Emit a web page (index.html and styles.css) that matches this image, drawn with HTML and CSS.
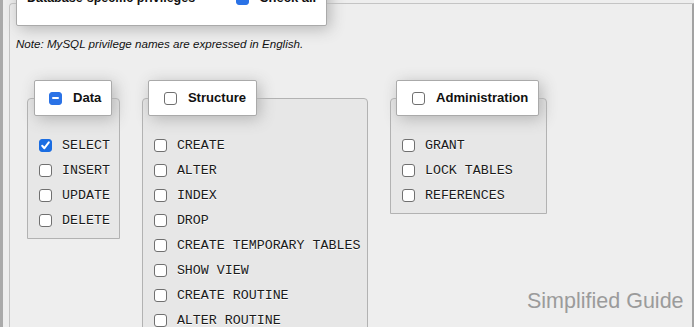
FILE: index.html
```html
<!DOCTYPE html>
<html>
<head>
<meta charset="utf-8">
<link rel="stylesheet" href="styles.css">
</head>
<body>
<div class="frame">
  <div class="outer">
    <div class="outer-legend">
      <span class="title">Database-specific privileges</span>
      <span class="cb cb-mixed"></span>
      <span class="check-all">Check all</span>
    </div>
    <p class="note">Note: MySQL privilege names are expressed in English.</p>
    <div class="groups">
      <div class="group">
        <div class="legend"><span class="cb cb-mixed"></span><span>Data</span></div>
        <ul class="privs">
          <li><span class="cb cb-on"><svg viewBox="0 0 13 13" width="13" height="13"><path d="M3.2 6.8 L5.4 9.2 L9.8 3.4" fill="none" stroke="#fff" stroke-width="2" stroke-linecap="round" stroke-linejoin="round"/></svg></span><span>SELECT</span></li>
          <li><span class="cb"></span><span>INSERT</span></li>
          <li><span class="cb"></span><span>UPDATE</span></li>
          <li><span class="cb"></span><span>DELETE</span></li>
        </ul>
      </div>
      <div class="group">
        <div class="legend"><span class="cb"></span><span>Structure</span></div>
        <ul class="privs">
          <li><span class="cb"></span><span>CREATE</span></li>
          <li><span class="cb"></span><span>ALTER</span></li>
          <li><span class="cb"></span><span>INDEX</span></li>
          <li><span class="cb"></span><span>DROP</span></li>
          <li><span class="cb"></span><span>CREATE TEMPORARY TABLES</span></li>
          <li><span class="cb"></span><span>SHOW VIEW</span></li>
          <li><span class="cb"></span><span>CREATE ROUTINE</span></li>
          <li><span class="cb"></span><span>ALTER ROUTINE</span></li>
          <li><span class="cb"></span><span>EXECUTE</span></li>
          <li><span class="cb"></span><span>CREATE VIEW</span></li>
        </ul>
      </div>
      <div class="group">
        <div class="legend"><span class="cb"></span><span>Administration</span></div>
        <ul class="privs">
          <li><span class="cb"></span><span>GRANT</span></li>
          <li><span class="cb"></span><span>LOCK TABLES</span></li>
          <li><span class="cb"></span><span>REFERENCES</span></li>
        </ul>
      </div>
    </div>
  </div>
  <div class="watermark">Simplified Guide</div>
</div>
</body>
</html>
```

FILE: styles.css
```css
html, body {
  margin: 0;
  padding: 0;
  height: 100%;
  overflow: hidden;
  background: #fff;
}

.frame {
  position: relative;
  width: 691px;
  height: 327px;
  overflow: hidden;
  background: #eee;
  border-left: 3px solid #aaa;
  font-family: "Liberation Sans", Arial, sans-serif;
  color: #111;
}

.outer {
  box-sizing: border-box;
  width: 685px;
  height: 400px;
  margin: 3px 0 0 6px;
  border: 1px solid #c4c4c4;
  border-right: 2px solid #a2a2a2;
  border-radius: 4px 0 0 0;
}

.outer-legend {
  display: flex;
  align-items: center;
  width: fit-content;
  margin: -26px 0 0 6px;
  padding: 10px 10px 18px 10px;
  line-height: 18px;
  background: #fff;
  border: 1px solid #aaa;
  border-radius: 2px;
  box-shadow: 3px 3px 15px #b5b5b5;
  font-weight: bold;
}

.outer-legend .title {
  font-size: 12.5px;
  margin-right: 41px;
}

.outer-legend .check-all {
  font-size: 13px;
  margin-left: 10px;
}

.note {
  margin: 10px 0 0 6px;
  font-style: italic;
  font-size: 11.6px;
  line-height: 15px;
  color: #111;
}

.groups {
  display: flex;
  align-items: flex-start;
  gap: 22px;
  margin: 29px 0 0 17px;
}

.group {
  margin-top: 18px;
  padding: 0 6.5px 5px 5.5px;
  background: #e7e7e7;
  border: 1px solid #b2b2b2;
  border-radius: 4px 4px 0 0;
}

.legend {
  display: flex;
  align-items: center;
  width: fit-content;
  margin-top: -19px;
  padding: 8px 10px 8px 14.5px;
  line-height: 18px;
  background: #fff;
  border: 1px solid #aaa;
  border-radius: 2px;
  box-shadow: 3px 3px 15px #b5b5b5;
  font-weight: bold;
  font-size: 13.1px;
  color: #111;
}

.legend .cb {
  margin-right: 11px;
}

.privs {
  list-style: none;
  margin: 17px 0 0 0;
  padding: 0;
}

.privs li {
  display: flex;
  align-items: center;
  height: 25px;
  font-family: "Liberation Mono", "Courier New", monospace;
  font-size: 13.3px;
  color: #1a1a1a;
  text-shadow: 0 1px 0 #fff;
  white-space: nowrap;
}

.privs .cb {
  margin: 0 10px 0 5.5px;
}

.cb {
  box-sizing: border-box;
  display: inline-block;
  flex: none;
  width: 13px;
  height: 13px;
  background: #fff;
  border: 1px solid #707070;
  border-radius: 3px;
  position: relative;
}

.cb svg {
  display: block;
  margin: -1px;
}

.cb-on {
  background: #1b6de2;
  border-color: #1b6de2;
}

.cb-mixed {
  background: #2a72e6;
  border-color: #2a72e6;
}

.cb-mixed::after {
  content: "";
  position: absolute;
  left: 2px;
  right: 2px;
  top: 4.5px;
  height: 2px;
  background: #fff;
  border-radius: 1px;
}

.watermark {
  position: absolute;
  left: 524px;
  top: 291px;
  font-family: "Liberation Sans", Arial, sans-serif;
  font-size: 21.5px;
  line-height: 1;
  color: #9b9b9b;
  white-space: nowrap;
}
```
